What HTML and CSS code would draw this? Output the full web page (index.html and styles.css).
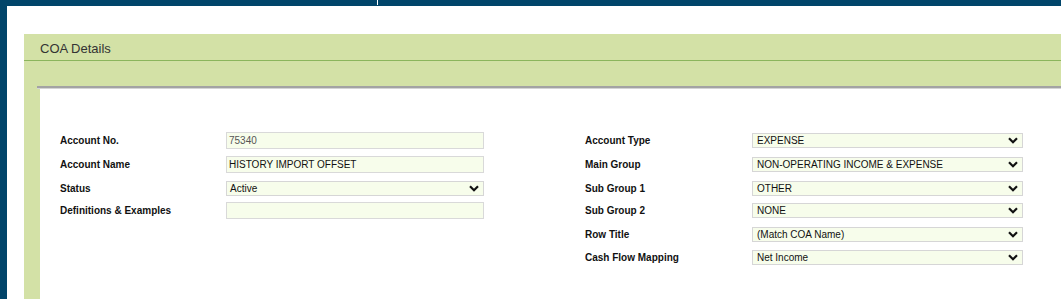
FILE: index.html
```html
<!DOCTYPE html>
<html>
<head>
<meta charset="utf-8">
<link rel="stylesheet" href="styles.css">
</head>
<body>
<div class="topbar"><span class="topbar-sep"></span></div>
<div class="layout">
  <div class="side-strip"></div>
  <main class="main">
    <section class="panel">
      <div class="panel-header">COA Details</div>
      <div class="panel-band"></div>
      <div class="panel-shadow"></div>
      <div class="panel-body">
        <div class="form-grid">
          <div class="label">Account No.</div>
          <div class="input readonly">75340</div>
          <div class="label">Account Type</div>
          <div class="select wide">EXPENSE<svg class="chev" viewBox="0 0 10 7"><path d="M1 1.3 L5 5.3 L9 1.3"/></svg></div>

          <div class="label">Account Name</div>
          <div class="input">HISTORY IMPORT OFFSET</div>
          <div class="label">Main Group</div>
          <div class="select wide">NON-OPERATING INCOME &amp; EXPENSE<svg class="chev" viewBox="0 0 10 7"><path d="M1 1.3 L5 5.3 L9 1.3"/></svg></div>

          <div class="label">Status</div>
          <div class="select narrow">Active<svg class="chev" viewBox="0 0 10 7"><path d="M1 1.3 L5 5.3 L9 1.3"/></svg></div>
          <div class="label">Sub Group 1</div>
          <div class="select wide">OTHER<svg class="chev" viewBox="0 0 10 7"><path d="M1 1.3 L5 5.3 L9 1.3"/></svg></div>

          <div class="label">Definitions &amp; Examples</div>
          <div class="input"></div>
          <div class="label">Sub Group 2</div>
          <div class="select wide">NONE<svg class="chev" viewBox="0 0 10 7"><path d="M1 1.3 L5 5.3 L9 1.3"/></svg></div>

          <div class="label"></div>
          <div></div>
          <div class="label">Row Title</div>
          <div class="select wide">(Match COA Name)<svg class="chev" viewBox="0 0 10 7"><path d="M1 1.3 L5 5.3 L9 1.3"/></svg></div>

          <div class="label"></div>
          <div></div>
          <div class="label">Cash Flow Mapping</div>
          <div class="select wide">Net Income<svg class="chev" viewBox="0 0 10 7"><path d="M1 1.3 L5 5.3 L9 1.3"/></svg></div>
        </div>
      </div>
    </section>
  </main>
</div>
</body>
</html>
```
FILE: styles.css
```css
html, body {
  margin: 0;
  padding: 0;
  height: 299px;
  overflow: hidden;
  background: #ffffff;
  font-family: "Liberation Sans", Arial, sans-serif;
}

.topbar {
  height: 6px;
  background: #01456a;
  display: flex;
}

.topbar-sep {
  width: 1px;
  height: 5px;
  margin-left: 377px;
  background: #ffffff;
}

.layout {
  display: flex;
  height: 293px;
}

.side-strip {
  width: 7px;
  background: #01456a;
  flex: none;
}

.main {
  flex: 1;
  padding: 28px 0 0 17px;
  overflow: hidden;
}

.panel {
  background: #d3e1a6;
  height: 100%;
  display: flex;
  flex-direction: column;
}

.panel-header {
  height: 27px;
  box-sizing: border-box;
  padding: 4px 0 0 16px;
  display: flex;
  align-items: center;
  font-size: 13px;
  line-height: 16px;
  color: #333333;
  border-bottom: 1px solid #8bb55c;
  flex: none;
}

.panel-band {
  height: 25px;
  flex: none;
}

.panel-shadow {
  margin-left: 13px;
  height: 1px;
  border-top: 2px solid #a3a3a3;
  background: #d4d4d4;
  flex: none;
}

.panel-body {
  margin-left: 16px;
  background: #ffffff;
  flex: 1;
  padding: 44px 0 0 20px;
}

.form-grid {
  display: grid;
  grid-template-columns: 166px 359px 167px 271px;
  grid-template-rows: 24px 24px 22px 24px 23px 15px;
  align-items: start;
}

.label {
  font-size: 10px;
  font-weight: bold;
  line-height: 15px;
  color: #111111;
  white-space: nowrap;
}

.input {
  width: 258px;
  height: 17px;
  box-sizing: border-box;
  border: 1px solid #d9d9d9;
  background: #f7fdeb;
  font-size: 10px;
  line-height: 15px;
  padding-left: 2px;
  color: #111111;
  margin-top: -1px;
}

.input.readonly {
  color: #555555;
}

.select {
  height: 15px;
  box-sizing: border-box;
  border: 1px solid #d6d6d6;
  background: #f7fdeb;
  font-size: 10px;
  line-height: 13px;
  color: #111111;
  display: flex;
  align-items: center;
  justify-content: space-between;
  padding: 0 4px 0 3px;
  white-space: nowrap;
}

.select.narrow {
  width: 258px;
}

.select.wide {
  width: 271px;
  padding-left: 4px;
}

.chev {
  width: 10px;
  height: 7px;
  flex: none;
}

.chev path {
  fill: none;
  stroke: #111111;
  stroke-width: 2.2;
}
```
